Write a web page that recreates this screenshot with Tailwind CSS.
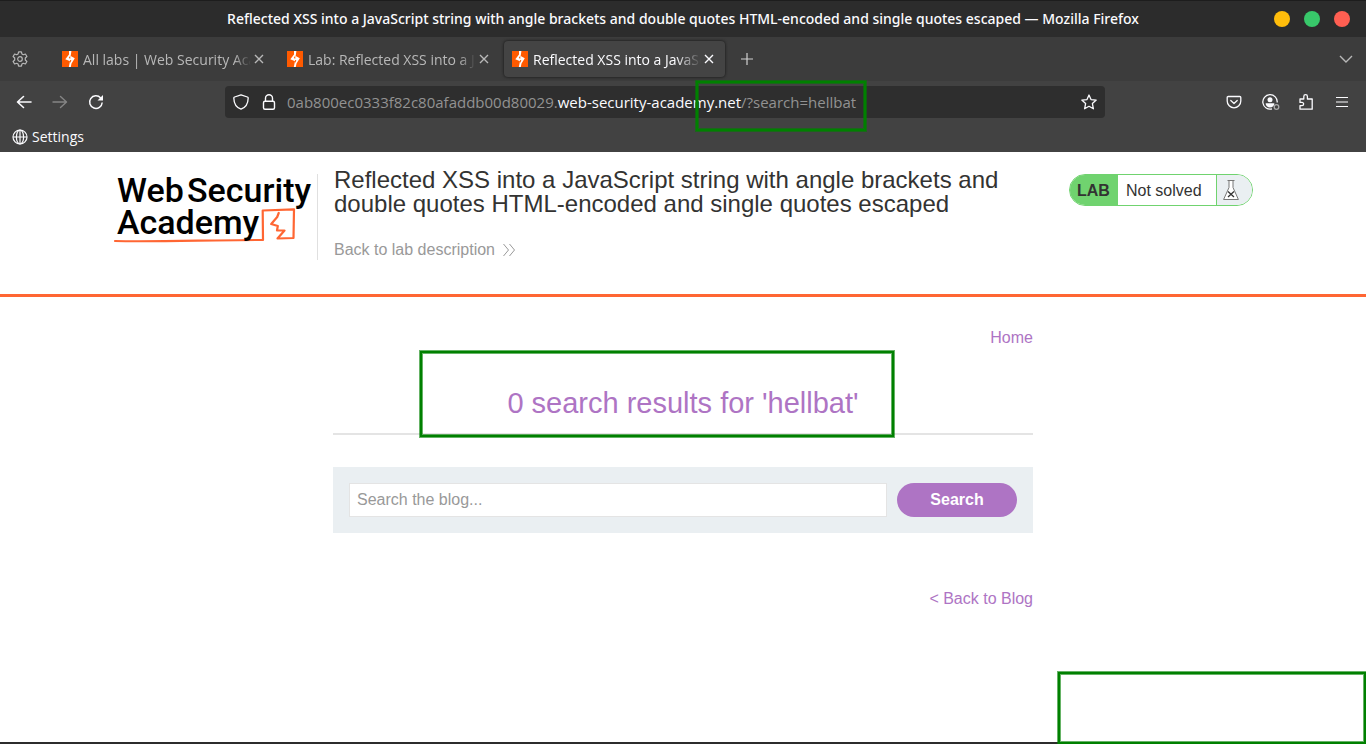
<!DOCTYPE html>
<html lang="en">
<head>
<meta charset="utf-8">
<meta name="viewport" content="width=device-width, initial-scale=1">
<title>Reflected XSS into a JavaScript string with angle brackets and double quotes HTML-encoded and single quotes escaped</title>
<script src="https://cdn.jsdelivr.net/npm/@tailwindcss/browser@4"></script>
</head>
<body class="relative flex min-h-screen flex-col overflow-x-hidden bg-white font-['Liberation_Sans',Arial,sans-serif] text-base text-[#333332]">
<svg class="hidden">
  <symbol id="bolt" viewBox="0 0 16 16"><path fill="#ff5a00" d="M0 0h16v16H0z"/><path fill="#fff" d="M7 0h2.400L8.700 5 12.800 7.300 9.500 12.500 8.800 16H6.800L8 10.200 3.300 8.300 7 3.500z"/><path fill="#ff5a00" d="M8.300 4.500 6.800 6.900l1.500.8zM7.900 8.800l1.500.8-1.300 2.500z"/></symbol>
  <symbol id="close" viewBox="0 0 10 10"><path fill="none" stroke="currentColor" stroke-width="1.400" d="m1 1 8 8M9 1 1 9"/></symbol>
</svg>

<div class="font-['Open_Sans','Noto_Sans',sans-serif] text-[#fbfbfe]">
  <!-- Window title bar -->
  <div class="relative flex h-[37px] items-center justify-center border-t border-[#1d1d1d] bg-[#2c2c2c]">
    <div class="font-['Noto_Sans',sans-serif] text-sm font-medium whitespace-nowrap">Reflected XSS into a JavaScript string with angle brackets and double quotes HTML-encoded and single quotes escaped — Mozilla Firefox</div>
    <div class="absolute right-4 flex gap-[14px]">
      <button aria-label="Minimize" class="size-4 rounded-full bg-[#ffbd0b]"></button>
      <button aria-label="Maximize" class="size-4 rounded-full bg-[#38c86a]"></button>
      <button aria-label="Close window" class="size-4 rounded-full bg-[#ff5f52]"></button>
    </div>
  </div>

  <!-- Tab strip -->
  <div class="flex h-11 items-center bg-[#3c3c3c] pr-[13px] pl-3 text-sm text-[#b8b8b8]">
    <button aria-label="Tab settings" class="mr-[34px] size-4"><svg class="size-4" viewBox="0 0 16 16" fill="none" stroke="currentColor" stroke-width="1.200" stroke-linejoin="round"><path d="M6.600.8h2.800l.5 2.100 1.400.8 2.100-.7 1.500 2.500-1.600 1.500v2l1.600 1.500-1.500 2.500-2.100-.7-1.400.8-.5 2.100H6.600l-.5-2.100-1.400-.8-2.100.7-1.500-2.500L2.700 9V7L1.100 5.500 2.600 3l2.100.7 1.400-.8z"/><circle cx="8" cy="8" r="2.300"/></svg></button>
    <div class="mr-1 flex h-9 w-[221px] items-center pr-[19px]">
      <svg class="mr-[5px] size-4 shrink-0"><use href="#bolt"/></svg>
      <span class="min-w-0 flex-1 overflow-hidden pt-0.5 whitespace-nowrap mask-r-from-90% mask-r-to-100%">All labs | Web Security Academy</span>
      <button aria-label="Close tab" class="ml-[3px]"><svg class="size-[10px]"><use href="#close"/></svg></button>
    </div>
    <div class="flex h-9 w-[221px] items-center pr-[19px]">
      <svg class="mr-[5px] size-4 shrink-0"><use href="#bolt"/></svg>
      <span class="min-w-0 flex-1 overflow-hidden pt-0.5 whitespace-nowrap mask-r-from-90% mask-r-to-100%">Lab: Reflected XSS into a JavaScript</span>
      <button aria-label="Close tab" class="ml-[3px]"><svg class="size-[10px]"><use href="#close"/></svg></button>
    </div>
    <div class="-ml-1 flex h-9 w-[221px] items-center rounded bg-[#444] pr-[11px] pl-2 text-[#fbfbfe] shadow-[0_0_3px_#111]">
      <svg class="mr-[5px] size-4 shrink-0"><use href="#bolt"/></svg>
      <span class="min-w-0 flex-1 overflow-hidden pt-0.5 whitespace-nowrap mask-r-from-85% mask-r-to-100%">Reflected XSS into a JavaScript</span>
      <button aria-label="Close tab" class="ml-[3px]"><svg class="size-[10px]"><use href="#close"/></svg></button>
    </div>
    <button aria-label="New tab" class="ml-4"><svg class="size-3" viewBox="0 0 12 12" stroke="#d0d0d0" stroke-width="1.200"><path d="M6 0v12M0 6h12"/></svg></button>
    <button aria-label="List all tabs" class="ml-auto"><svg class="h-2 w-[14px]" viewBox="0 0 14 8" fill="none" stroke="currentColor" stroke-width="1.400"><path d="m1 1 6 6 6-6"/></svg></button>
  </div>

  <!-- Navigation -->
  <div class="flex h-[42px] items-center bg-[#424242] px-4">
    <div class="flex w-[209px] gap-5">
      <button aria-label="Back"><svg class="size-4" viewBox="0 0 16 16" fill="none" stroke="currentColor" stroke-width="1.600" stroke-linecap="round" stroke-linejoin="round"><path d="M15 8H2m5.500-5.500L1.500 8l6 5.500"/></svg></button>
      <button aria-label="Forward" class="text-[#858585]"><svg class="size-4" viewBox="0 0 16 16" fill="none" stroke="currentColor" stroke-width="1.400" stroke-linecap="round" stroke-linejoin="round"><path d="M1 8h13M8.500 2.500l6 5.500-6 5.500"/></svg></button>
      <button aria-label="Reload"><svg class="size-4" viewBox="0 0 16 16" fill="none" stroke="currentColor" stroke-width="1.500"><path d="M14.200 8.500A6.300 6.300 0 1 1 12.700 4"/><path fill="currentColor" stroke="none" d="M15 1v5.500H9.500z"/></svg></button>
    </div>
    <div class="relative flex h-8 min-w-0 flex-1 items-center rounded bg-[#2e2e2e] px-2 text-[15px]">
      <svg class="mr-3 size-4" viewBox="0 0 16 16" fill="none" stroke="currentColor" stroke-width="1.300" stroke-linejoin="round"><path d="M8 .8 14.400 3c.6.200.8.500.8 1-.1 5-2.200 9.400-7.200 11.200C3 13.400.900 9 .8 4c0-.5.200-.8.800-1z"/></svg>
      <svg class="mr-[10px] size-4" viewBox="0 0 16 16" fill="none" stroke="currentColor" stroke-width="1.400"><rect x="2.500" y="7.200" width="11" height="8" rx="1.500"/><path d="M4.500 7V4.300a3.500 3.500 0 0 1 7 0V7"/></svg>
      <div class="flex-1 whitespace-nowrap text-[#929292]">0ab800ec0333f82c80afaddb00d80029.<span class="text-[#fbfbfe]">web-security-academy.net</span>/?search=hellbat</div>
      <button aria-label="Bookmark this page"><svg class="size-4" viewBox="0 0 16 16" fill="none" stroke="currentColor" stroke-width="1.300" stroke-linejoin="round"><path d="m8 1 2 4.600 5.200.5-3.800 3.500 1 5.200L8 12.300l-4.400 2.500 1-5.200L.8 6.100 6 5.600z"/></svg></button>
      <div class="absolute -top-[5px] left-[471px] h-[50px] w-[170px] border-2 border-[#008000] ring-1 ring-[#008000]/60 inset-ring-1 inset-ring-[#008000]/60"></div>
    </div>
    <div class="ml-[121px] flex items-center gap-5">
      <button aria-label="Save to Pocket"><svg class="size-4" viewBox="0 0 16 16" fill="none" stroke="currentColor" stroke-width="1.300" stroke-linecap="round" stroke-linejoin="round"><path d="M2.200 2.500h11.600a1 1 0 0 1 1 1V7A6.800 6.800 0 0 1 1.200 7V3.500a1 1 0 0 1 1-1zM4.800 6.500 8 9.500l3.200-3"/></svg></button>
      <button aria-label="Account"><svg class="size-4 overflow-visible" viewBox="0 0 16 16" fill="none" stroke="currentColor" stroke-width="1.300"><path d="M10 14.800A7.200 7.200 0 1 1 15.200 8.500"/><circle cx="8" cy="5.800" r="2.500" fill="currentColor" stroke="none"/><path fill="currentColor" stroke="none" d="M3.600 9.200h8.800c0 2.500-2 4.200-4.400 4.200s-4.400-1.700-4.400-4.200z"/><circle cx="14.500" cy="13" r="2.300" fill="#424242" stroke="#aaa"/></svg></button>
      <button aria-label="Extensions"><svg class="size-4" viewBox="0 0 16 16" fill="none" stroke="currentColor" stroke-width="1.300" stroke-linejoin="round"><path d="M5.800 5V2.500a1.800 1.800 0 0 1 3.600 0V5h4.800v10.200H2v-3.500h2a1.600 1.600 0 0 0 0-3.300H2V5z"/></svg></button>
      <button aria-label="Application menu"><svg class="size-4" viewBox="0 0 16 16" stroke="currentColor" stroke-width="1.200"><path d="M2 3.500h12M2 8h12M2 12.500h12"/></svg></button>
    </div>
  </div>

  <!-- Bookmarks -->
  <div class="flex h-[29px] items-start bg-[#424242] pt-1 pl-3 text-sm">
    <a href="#" class="flex items-center gap-1"><svg class="size-4" viewBox="0 0 16 16" fill="none" stroke="currentColor" stroke-width="1.200"><circle cx="8" cy="8" r="7"/><ellipse cx="8" cy="8" rx="3.600" ry="7"/><path d="M1 8h14M8 1v14"/></svg>Settings</a>
  </div>
</div>

<!-- Lab header -->
<header class="border-b-[3px] border-[#ff6633]">
  <div class="mx-auto flex h-[142px] w-full max-w-[1140px] items-start pt-[22px]">
    <a href="#" aria-label="Web Security Academy" class="h-[86px] w-[205px] shrink-0 border-r border-[#e0e0e0]">
      <svg class="h-[86px] w-[204px]" viewBox="0 0 204 86">
        <path fill="none" stroke="#ff6633" stroke-width="2.200" stroke-linecap="round" stroke-linejoin="round" d="M2 67c40 1 96-1 148-1l-.3-29.500 31.300-1.200-.5 28.700-16 .5 7-8h-7.500l.8-4.500-6.600-2 6-7 1.500-4"/>
        <g class="font-['Roboto',sans-serif] font-medium" font-size="34" fill="#000">
          <text x="4" y="28">Web</text>
          <text x="74" y="28">Security</text>
          <text x="4" y="60">Academy</text>
        </g>
      </svg>
    </a>
    <div class="ml-4 w-[700px]">
      <h1 class="mt-[-6px] text-2xl leading-6">Reflected XSS into a JavaScript string with angle brackets and double quotes HTML-encoded and single quotes escaped</h1>
      <a href="#" class="mt-[22px] flex items-center gap-2 leading-6 text-[#999]">Back to lab description<svg class="h-3 w-3" viewBox="0 0 12 12" fill="none" stroke="currentColor"><path d="m.5 0 5 6-5 6M6.500 0l5 6-5 6"/></svg></a>
    </div>
    <div class="ml-auto flex h-8 overflow-hidden rounded-full border border-[#70d36f] leading-[30px]">
      <span class="w-12 bg-[#70d36f] pt-px pl-[7px] font-bold">LAB</span>
      <span class="w-[98px] pt-px pl-2">Not solved</span>
      <span class="flex w-9 items-center border-l border-[#70d36f] bg-[#eaeff2] pl-[6px]"><svg class="h-5 w-4" viewBox="0 0 16 20" fill="#fff" stroke="#777"><path d="M6 .5v7L.6 19.500h14.800L10 7.500v-7M4.500.5h7"/><path stroke="#333" stroke-width="1.300" d="m5 11.500 6 5.500m0-5.500L5 17"/></svg></span>
    </div>
  </div>
</header>

<main class="mx-auto flex w-full max-w-[700px] flex-1 flex-col">
  <nav class="mt-[31px] flex justify-end leading-5"><a href="#" class="text-[#ae74c4]">Home</a></nav>
  <section class="relative mt-[38px] border-b-2 border-[#e4e4e4] pb-[13px] text-center">
    <h2 class="text-[29px] leading-[34px] text-[#ae74c4]">0 search results for 'hellbat'</h2>
    <div class="absolute -top-[35px] left-[87px] h-[86px] w-[474px] border-2 border-[#008000] ring-1 ring-[#008000]/60 inset-ring-1 inset-ring-[#008000]/60"></div>
  </section>
  <form class="mt-8 flex gap-[10px] bg-[#eaeff2] p-4">
    <input type="text" aria-label="Search the blog" placeholder="Search the blog..." class="h-[34px] min-w-0 flex-1 border border-[#e4e4e4] bg-white px-[7px] placeholder:text-[#999]">
    <button type="button" class="h-[34px] w-[120px] rounded-full bg-[#ae74c4] font-bold text-white">Search</button>
  </form>
  <div class="mt-14 flex justify-end leading-5"><a href="#" class="text-[#ae74c4]">&lt; Back to Blog</a></div>
</main>
<div class="h-[2px] bg-[#2c2c2c]"></div>
<div class="absolute right-0 bottom-0 h-[72px] w-[308px] border-2 border-[#008000] ring-1 ring-[#008000]/60 inset-ring-1 inset-ring-[#008000]/60"></div>
</body>
</html>
